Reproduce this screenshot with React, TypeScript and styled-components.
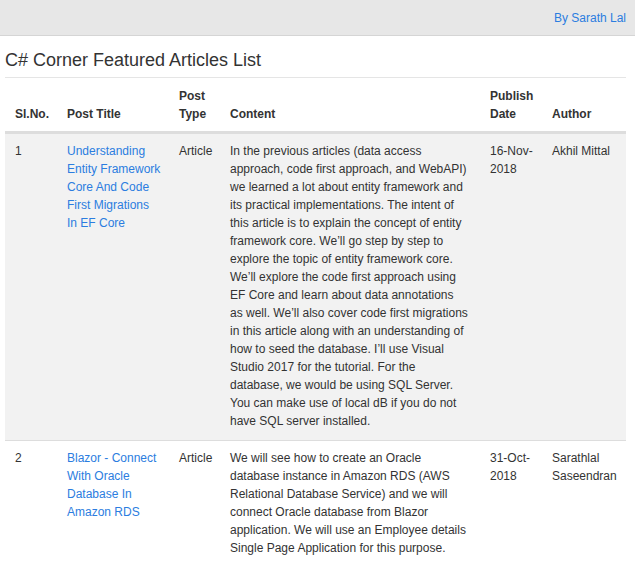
import React from "react";
import styled, { createGlobalStyle } from "styled-components";

const GlobalStyle = createGlobalStyle`
  body {
    margin: 0;
    background: #fff;
    color: #333;
    font-family: "Liberation Sans", Arial, sans-serif;
    font-size: 12px;
    line-height: 18px;
  }
`;

const StyledTopBar = styled.div`
  height: 35px;
  display: flex;
  align-items: center;
  justify-content: flex-end;
  padding-right: 9px;
  background-color: #e7e7e7;
  border-bottom: 1px solid #d5d5d5;
`;

const StyledLink = styled.a`
  color: #2b7de0;
  text-decoration: none;
`;

const StyledContainer = styled.div`
  padding: 0 9px 0 5px;
`;

const StyledTitle = styled.h1`
  margin: 13px 0 0;
  padding-bottom: 6px;
  border-bottom: 1px solid #e5e5e5;
  font-size: 18px;
  font-weight: normal;
  line-height: 22px;
  color: #333;
`;

const StyledTable = styled.table`
  width: 100%;
  table-layout: fixed;
  border-collapse: separate;
  border-spacing: 0;
`;

const StyledTh = styled.th`
  padding: 9px 6px 8px 10px;
  text-align: left;
  vertical-align: bottom;
  font-weight: bold;
  border-bottom: 2px solid #dddddd;
`;

const StyledRow = styled.tr<{ $striped?: boolean }>`
  background-color: ${props => (props.$striped ? "#f2f2f2" : "transparent")};
`;

const StyledTd = styled.td<{ $padRight?: number }>`
  padding: 8px ${props => props.$padRight ?? 6}px 10px 10px;
  vertical-align: top;
  border-top: 1px solid #dddddd;
`;

interface Article {
  no: number;
  title: string;
  type: string;
  content: string;
  date: string;
  author: string;
}

const articles: Article[] = [
  {
    no: 1,
    title: "Understanding Entity Framework Core And Code First Migrations In EF Core",
    type: "Article",
    content:
      "In the previous articles (data access approach, code first approach, and WebAPI) we learned a lot about entity framework and its practical implementations. The intent of this article is to explain the concept of entity framework core. We\u2019ll go step by step to explore the topic of entity framework core. We\u2019ll explore the code first approach using EF Core and learn about data annotations as well. We\u2019ll also cover code first migrations in this article along with an understanding of how to seed the database. I\u2019ll use Visual Studio 2017 for the tutorial. For the database, we would be using SQL Server. You can make use of local dB if you do not have SQL server installed.",
    date: "16-Nov-2018",
    author: "Akhil Mittal"
  },
  {
    no: 2,
    title: "Blazor - Connect With Oracle Database In Amazon RDS",
    type: "Article",
    content:
      "We will see how to create an Oracle database instance in Amazon RDS (AWS Relational Database Service) and we will connect Oracle database from Blazor application. We will use an Employee details Single Page Application for this purpose.",
    date: "31-Oct-2018",
    author: "Sarathlal Saseendran"
  }
];

export default function App() {
  return (
    <>
      <GlobalStyle />
      <StyledTopBar>
        <StyledLink href="#">By Sarath Lal</StyledLink>
      </StyledTopBar>
      <StyledContainer>
        <StyledTitle>C# Corner Featured Articles List</StyledTitle>
        <StyledTable>
          <colgroup>
            <col style={{ width: 52 }} />
            <col style={{ width: 112 }} />
            <col style={{ width: 51 }} />
            <col style={{ width: 260 }} />
            <col style={{ width: 62 }} />
            <col />
          </colgroup>
          <thead>
            <tr>
              <StyledTh>Sl.No.</StyledTh>
              <StyledTh>Post Title</StyledTh>
              <StyledTh>Post Type</StyledTh>
              <StyledTh>Content</StyledTh>
              <StyledTh>Publish Date</StyledTh>
              <StyledTh>Author</StyledTh>
            </tr>
          </thead>
          <tbody>
            {articles.map((article, index) => (
              <StyledRow key={article.no} $striped={index % 2 === 0}>
                <StyledTd>{article.no}</StyledTd>
                <StyledTd $padRight={8}>
                  <StyledLink href="#">{article.title}</StyledLink>
                </StyledTd>
                <StyledTd>{article.type}</StyledTd>
                <StyledTd $padRight={12}>{article.content}</StyledTd>
                <StyledTd>{article.date}</StyledTd>
                <StyledTd>{article.author}</StyledTd>
              </StyledRow>
            ))}
          </tbody>
        </StyledTable>
      </StyledContainer>
    </>
  );
}
